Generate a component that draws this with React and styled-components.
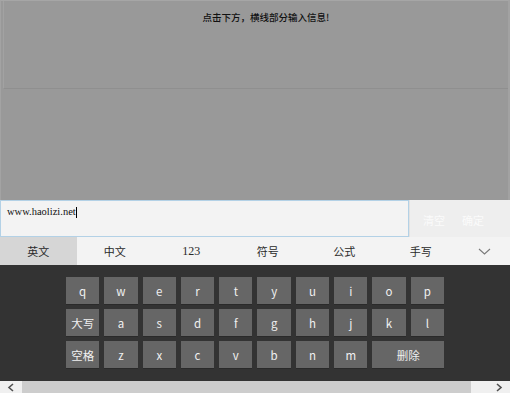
import React from "react";
import styled, { createGlobalStyle } from "styled-components";

const GlobalStyle = createGlobalStyle`
  html, body {
    margin: 0;
    padding: 0;
    background: #999999;
    overflow: hidden;
  }
  * {
    box-sizing: border-box;
  }
`;

const ROWS = [
  ["q", "w", "e", "r", "t", "y", "u", "i", "o", "p"],
  ["大写", "a", "s", "d", "f", "g", "h", "j", "k", "l"],
  ["空格", "z", "x", "c", "v", "b", "n", "m", "删除"],
];

const TABS = ["英文", "中文", "123", "符号", "公式", "手写"];

export default function App() {
  return (
    <>
      <GlobalStyle />
      <Page>
        <Backdrop>
          <Sheet>
            <Hint>点击下方，横线部分输入信息!</Hint>
          </Sheet>
        </Backdrop>

        <InputBar>
          <Field>
            www.haolizi.net
            <Caret />
          </Field>
          <Actions>
            <ActionButton>清空</ActionButton>
            <ActionButton>确定</ActionButton>
          </Actions>
        </InputBar>

        <TabBar>
          {TABS.map((t, i) => (
            <Tab key={t} $active={i === 0} $serif={t === "123"}>
              {t}
            </Tab>
          ))}
          <Collapse>
            <svg width="13" height="7" viewBox="0 0 13 7">
              <path d="M1 1l5.5 5L12 1" fill="none" stroke="#7a7a7a" strokeWidth="1.1" />
            </svg>
          </Collapse>
        </TabBar>

        <Keyboard>
          <Keys>
            {ROWS.flat().map((k, i) => (
              <Key key={i} $wide={k === "删除"}>
                {k}
              </Key>
            ))}
          </Keys>
        </Keyboard>

        <Scrollbar>
          <Arrow>
            <svg width="8" height="9" viewBox="0 0 8 9">
              <path d="M6 1L2 4.5 6 8" fill="none" stroke="#505050" strokeWidth="1.6" />
            </svg>
          </Arrow>
          <Track>
            <Thumb />
          </Track>
          <Arrow>
            <svg width="8" height="9" viewBox="0 0 8 9">
              <path d="M2 1l4 3.5L2 8" fill="none" stroke="#505050" strokeWidth="1.6" />
            </svg>
          </Arrow>
        </Scrollbar>
      </Page>
    </>
  );
}

const Page = styled.div`
  width: 510px;
  height: 393px;
  overflow: hidden;
  display: flex;
  flex-direction: column;
  font-family: "Noto Sans CJK SC", "Liberation Sans", sans-serif;

  & > * {
    flex-shrink: 0;
  }
`;

const Backdrop = styled.div`
  height: 200px;
  background: #999999;
  border-top: 1px solid #a6a6a6;
  border-left: 1px solid #a3a3a3;
  border-right: 2px solid #a2a2a2;
  padding-left: 2px;
`;

const Sheet = styled.div`
  height: 88px;
  border-left: 1px solid #a2a2a2;
  border-bottom: 1px solid #8f8f8f;
  display: flex;
  justify-content: center;
  padding-top: 9px;
`;

const Hint = styled.div`
  font-size: 9.5px;
  font-weight: 500;
  line-height: 14px;
  color: #111111;
  margin-left: 20px;
`;

const InputBar = styled.div`
  height: 37px;
  display: flex;
`;

const Field = styled.div`
  width: 409px;
  border: 1px solid #b3d1e6;
  background: #f3f3f3;
  padding: 4px 6px;
  font-family: "Liberation Serif", serif;
  font-size: 10.5px;
  line-height: 14px;
  color: #111111;
  display: flex;
  align-items: flex-start;
`;

const Caret = styled.span`
  display: inline-block;
  width: 1px;
  height: 11px;
  margin-top: 2px;
  background: #000000;
`;

const Actions = styled.div`
  flex: 1;
  background: #eeeeee;
  border-left: 1px solid #e2e2e2;
  display: flex;
  align-items: center;
  gap: 17px;
  padding-top: 3px;
  padding-left: 13px;
`;

const ActionButton = styled.span`
  font-size: 11px;
  color: #fbfbfb;
`;

const TabBar = styled.div`
  height: 28px;
  display: flex;
  background: #f3f3f3;
`;

const Tab = styled.div`
  width: 15%;
  display: flex;
  align-items: center;
  justify-content: center;
  font-size: ${(p) => (p.$serif ? "12px" : "11px")};
  color: #2a2a2a;
  background: ${(p) => (p.$active ? "#d6d6d6" : "transparent")};
  font-family: ${(p) =>
    p.$serif ? '"Liberation Serif", serif' : '"Noto Sans CJK SC", sans-serif'};
`;

const Collapse = styled.div`
  flex: 1;
  display: flex;
  align-items: center;
  justify-content: center;
  padding-top: 1px;
`;

const Keyboard = styled.div`
  background: #333333;
  padding: 12px 0 13px;
`;

const Keys = styled.div`
  width: 378px;
  margin: 0 auto;
  display: grid;
  grid-template-columns: repeat(10, 1fr);
  grid-auto-rows: 27px;
  gap: 5px;
`;

const Key = styled.div`
  grid-column: ${(p) => (p.$wide ? "span 2" : "auto")};
  background: #666666;
  color: #f0f0f0;
  font-size: 11.5px;
  display: flex;
  align-items: center;
  justify-content: center;
  box-shadow: 0 1px 0 #2a2a2a;
`;

const Scrollbar = styled.div`
  height: 17px;
  background: #f0f0f0;
  display: flex;
`;

const Arrow = styled.div`
  width: 22px;
  height: 12px;
  display: flex;
  align-items: center;
  justify-content: center;
`;

const Track = styled.div`
  flex: 1;
  display: flex;
`;

const Thumb = styled.div`
  width: 100%;
  height: 12px;
  background: #cdcdcd;
  margin-right: 17px;
`;
